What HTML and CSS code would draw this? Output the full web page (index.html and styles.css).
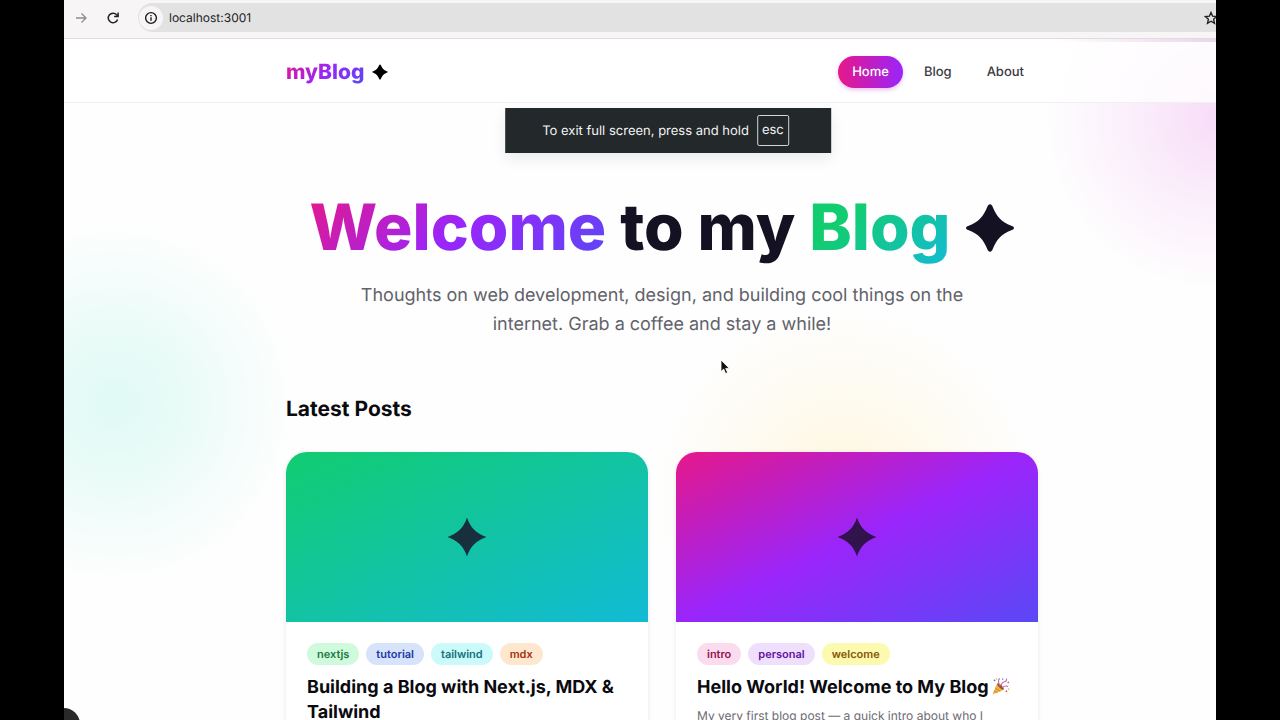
FILE: index.html
```
<!DOCTYPE html>
<html lang="en">
<head>
  <meta charset="utf-8">
  <title>myBlog</title>
  <link rel="stylesheet" href="styles.css">
</head>
<body>
  <div class="screen">
    <div class="toolbar">
      <button type="button" class="tool back" aria-label="Forward">
        <svg width="14" height="14" viewBox="0 0 14 14"><path d="M2 7h10M7.500 2.500L12 7l-4.500 4.500" fill="none" stroke="#8d8d8d" stroke-width="1.300"/></svg>
      </button>
      <button type="button" class="tool" aria-label="Reload">
        <svg width="14" height="14" viewBox="0 0 14 14"><path d="M11.600 8.500A4.800 4.800 0 1 1 10.600 3.700L12 5.200" fill="none" stroke="#222" stroke-width="1.500"/><path d="M12.100 1.500v4H8.100" fill="none" stroke="#222" stroke-width="1.500"/></svg>
      </button>
      <div class="address">
        <button type="button" class="info" aria-label="Site information">
          <svg width="14" height="14" viewBox="0 0 14 14"><circle cx="7" cy="7" r="5.400" fill="none" stroke="#1d1d1d" stroke-width="1.400"/><path d="M7 6.300v3.500M7 4v1.300" stroke="#1d1d1d" stroke-width="1.400"/></svg>
        </button>
        <input type="text" class="url" aria-label="Address" value="localhost:3001">
        <svg class="bookmark" width="14" height="14" viewBox="0 0 14 14"><path d="M7 1.500l1.600 3.700 4 .4-3 2.700.9 4L7 10.200l-3.500 2.100.9-4-3-2.700 4-.4z" fill="none" stroke="#222" stroke-width="1.400"/></svg>
      </div>
    </div>

    <div class="page">
      <header class="header">
        <div class="container header-inner">
          <a href="#" class="logo"><span class="grad-pink">myBlog</span>
            <svg class="logo-star" viewBox="0 0 40 40"><use href="#star"/></svg>
          </a>
          <nav class="nav">
            <a href="#" class="nav-link active">Home</a>
            <a href="#" class="nav-link">Blog</a>
            <a href="#" class="nav-link">About</a>
          </nav>
        </div>
      </header>

      <main class="container">
        <section class="hero">
          <h1><span class="grad-pink">Welcome</span> to my <span class="grad-green">Blog</span> <svg class="hero-star" viewBox="0 0 40 40"><use href="#star"/></svg></h1>
          <p>Thoughts on web development, design, and building cool things on the internet. Grab a coffee and stay a while!</p>
        </section>

        <h2>Latest Posts</h2>
        <div class="posts">
          <article class="card">
            <div class="cover cover-green">
              <svg class="cover-star" viewBox="0 0 40 40"><use href="#star-sharp"/></svg>
            </div>
            <div class="card-body">
              <div class="tags">
                <span class="tag green">nextjs</span>
                <span class="tag blue">tutorial</span>
                <span class="tag cyan">tailwind</span>
                <span class="tag orange">mdx</span>
              </div>
              <h3>Building a Blog with Next.js, MDX &amp; Tailwind</h3>
            </div>
          </article>

          <article class="card">
            <div class="cover cover-pink">
              <svg class="cover-star" viewBox="0 0 40 40"><use href="#star-sharp"/></svg>
            </div>
            <div class="card-body">
              <div class="tags">
                <span class="tag pink">intro</span>
                <span class="tag purple">personal</span>
                <span class="tag yellow">welcome</span>
              </div>
              <h3>Hello World! Welcome to My Blog <svg class="party" viewBox="0 0 20 20">
                <path d="M1.500 18.500L6.500 6.500Q11 8 13.500 13.500z" fill="#f2b13c"/>
                <path d="M3 15l4 1.400M4.300 11.500l5.500 3.700" stroke="#cf8636" stroke-width="1"/>
                <ellipse cx="10" cy="10" rx="1.500" ry="4.600" transform="rotate(-45 10 10)" fill="#8a5a35"/>
                <path d="M9.500 9Q6.500 5 9 1.500M11 9.500Q10.500 6 14 5t2-3.500M12 11q3-2.500 6-1" fill="none" stroke="#c46aa8" stroke-width="1.200"/>
                <path d="M3 3l1.500 1.300M12 1.500l.6 1.300" stroke="#4c8fd8" stroke-width="1.500"/>
                <path d="M17.500 6l1.400-.6M15.500 14.500l1.500 1" stroke="#e2504b" stroke-width="1.600"/>
                <path d="M5.500 2.500l.8-1M18 13l1-.4" stroke="#e8a93a" stroke-width="1.600"/>
              </svg></h3>
              <p>My very first blog post — a quick intro about who I am and what to expect here.</p>
            </div>
          </article>
        </div>
      </main>
    </div>

    <div class="toast">To exit full screen, press and hold <kbd>esc</kbd></div>
    <div class="dev-badge"></div>
    <svg class="cursor" viewBox="0 0 10 16"><path d="M1 1v11.500l2.700-2.400 1.900 4.400 2-.9-1.900-4.200h3.600z" fill="#111" stroke="#fff" stroke-width=".8"/></svg>
  </div>

  <svg class="defs" aria-hidden="true">
    <symbol id="star" viewBox="0 0 40 40"><path d="M20 1C21 1 21.600 1.800 22.200 3.200C25.500 11 29 15 37 18.200C38.600 18.800 39.200 19.300 39.200 20S38.600 21.200 37 21.800C29 25 25.500 29 22.200 36.800C21.600 38.200 21 39 20 39S18.400 38.200 17.800 36.800C14.500 29 11 25 3 21.800C1.400 21.200.8 20.700.8 20S1.400 18.800 3 18.200C11 15 14.500 11 17.800 3.200C18.400 1.800 19 1 20 1z"/></symbol>
    <symbol id="star-sharp" viewBox="0 0 40 40"><path d="M20 .5C23 10 29 16.500 39.500 20C29 23.500 23 30 20 39.500C17 30 11 23.500.5 20C11 16.500 17 10 20 .5z"/></symbol>
  </svg>
</body>
</html>
```
FILE: styles.css
```
* {
  box-sizing: border-box;
}

body {
  margin: 0;
  padding: 0 5%;
  background: #000;
  color: #0a0a0f;
  font-family: Inter, "Liberation Sans", sans-serif;
  text-rendering: geometricPrecision;
}

a {
  color: inherit;
  text-decoration: none;
}

.defs {
  position: absolute;
  width: 0;
  height: 0;
}

.screen {
  position: relative;
  height: 100vh;
  overflow: hidden;
  background: #fefefe;
}

/* browser toolbar */
.toolbar {
  display: flex;
  align-items: center;
  gap: 18px;
  padding: 3px 0 6px 10px;
  background: #f7f5f6;
  border-bottom: 1px solid #dedcdd;
}

.tool,
.info {
  display: flex;
  padding: 0;
  border: 0;
  background: none;
}

.address {
  display: flex;
  flex: 1;
  align-items: center;
  height: 29px;
  padding-left: 1px;
  border-radius: 15px 0 0 15px;
  background: #e3e2e3;
  overflow: hidden;
}

.info {
  padding: 5px;
  border-radius: 50%;
  background: #f7f5f6;
}

.url {
  flex: 1;
  padding: 0 6px;
  border: 0;
  background: none;
  color: #222;
  font: 12px Inter, "Liberation Sans", sans-serif;
  text-rendering: inherit;
}

.bookmark {
  margin-right: -2px;
}

/* page */
.page {
  min-height: 100vh;
  background:
    radial-gradient(circle at 100% 80px, rgba(217, 70, 219, .18), rgba(217, 70, 219, .08) 90px, transparent 170px),
    radial-gradient(circle at 50px 365px, rgba(45, 225, 190, .15), rgba(45, 225, 190, .09) 80px, transparent 180px),
    radial-gradient(circle at 780px 460px, rgba(250, 200, 40, .16), rgba(250, 200, 40, .07) 100px, transparent 190px);
}

.container {
  width: 752px;
  max-width: 100%;
  margin: 0 auto;
  position: relative;
  left: 22px;
}

.header {
  background:
    linear-gradient(to right, transparent, #ead6ea) top right / 160px 3px no-repeat,
    rgba(255, 255, 255, .8);
  border-bottom: 1px solid #f0eff1;
}

.header-inner {
  display: flex;
  align-items: center;
  justify-content: space-between;
  padding: 17px 0 14px;
}

.logo {
  display: flex;
  align-items: center;
  gap: 8px;
  font-size: 21px;
  font-weight: 800;
}

.logo-star {
  width: 16px;
  height: 16px;
}

.nav {
  display: flex;
  gap: 7px;
}

.nav-link {
  padding: 0 14px;
  border-radius: 16px;
  color: #3b3b44;
  font-size: 13px;
  font-weight: 500;
  line-height: 32px;
}

.nav-link.active {
  background: linear-gradient(to right, #e6188a, #9a25fa);
  box-shadow: 0 2px 4px rgba(200, 40, 220, .3);
  color: #fff;
}

.grad-pink {
  background: linear-gradient(135deg, #e6188a, #9a25fa 50%, #5a48f5);
  -webkit-background-clip: text;
  background-clip: text;
  color: transparent;
}

.grad-green {
  background: linear-gradient(135deg, #12cc70 30%, #12bbd6);
  -webkit-background-clip: text;
  background-clip: text;
  color: transparent;
}

.hero {
  padding: 86px 0 57px;
  text-align: center;
}

.hero h1 {
  margin: 0 0 15px;
  color: #141222;
  font-size: 64px;
  font-weight: 800;
  line-height: 77px;
  white-space: nowrap;
}

.hero-star {
  width: 50px;
  height: 50px;
  fill: #141222;
  vertical-align: -3px;
}

.hero p {
  max-width: 620px;
  margin: 0 auto;
  color: #62626a;
  font-size: 18px;
  line-height: 29px;
}

h2 {
  margin: 0 0 28px;
  font-size: 21px;
  font-weight: 700;
  line-height: 28px;
}

.posts {
  display: grid;
  grid-template-columns: 1fr 1fr;
  gap: 28px;
}

.card {
  border-radius: 21px;
  background: #fff;
  box-shadow: 0 1px 4px rgba(0, 0, 0, .1);
  overflow: hidden;
}

.cover {
  display: flex;
  align-items: center;
  justify-content: center;
  height: 170px;
}

.cover-green {
  background: linear-gradient(to bottom right, #12cc70, #12bbd6);
}

.cover-pink {
  background: linear-gradient(to bottom right, #e6188a, #9a25fa 50%, #5a48f5);
}

.cover-star {
  width: 40px;
  height: 40px;
  fill: #1a1028;
  opacity: .82;
}

.card-body {
  padding: 21px;
}

.tags {
  display: flex;
  gap: 7px;
  margin-bottom: 10px;
}

.tag {
  padding: 0 10px;
  border-radius: 11px;
  font-size: 11px;
  font-weight: 600;
  line-height: 22px;
}

.green { background: #cffbdc; color: #1c7a45; }
.blue { background: #d6e3fb; color: #2437a8; }
.cyan { background: #cbfafa; color: #17717c; }
.orange { background: #fde8cf; color: #a8300f; }
.pink { background: #fbdcef; color: #96104f; }
.purple { background: #eee0fc; color: #6411a5; }
.yellow { background: #fbfaae; color: #85560b; }

.card h3 {
  margin: 0 0 6px;
  font-size: 18px;
  font-weight: 700;
  line-height: 25px;
}

.party {
  width: 19px;
  height: 19px;
  margin-left: -2px;
  vertical-align: -3px;
}

.card p {
  max-width: 300px;
  margin: 0;
  color: #6b6b73;
  font-size: 12px;
  line-height: 20px;
}

/* things floating over the page */
.toast {
  position: absolute;
  top: 108px;
  left: calc(50% + 28px);
  transform: translateX(-50%);
  display: flex;
  align-items: center;
  gap: 8px;
  padding: 7px 42px 7px 37px;
  background: #23282b;
  box-shadow: 0 6px 14px rgba(0, 0, 0, .08);
  color: #f2f3f3;
  font-size: 13px;
  white-space: nowrap;
}

.toast kbd {
  padding: 0 4px;
  border: 1px solid #d4d6d6;
  border-radius: 2px;
  font-family: inherit;
  font-size: 13px;
  line-height: 29px;
}

.dev-badge {
  position: absolute;
  bottom: -20px;
  left: -16px;
  width: 32px;
  height: 32px;
  border-radius: 50%;
  background: #2a2a2a;
}

.cursor {
  position: absolute;
  top: 359px;
  left: 656px;
  width: 10px;
  height: 16px;
}
```
